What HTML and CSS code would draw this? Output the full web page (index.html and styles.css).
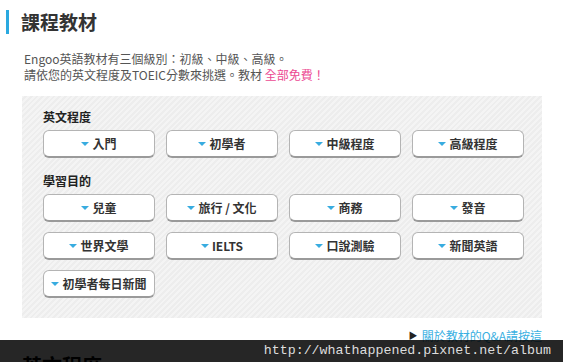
FILE: index.html
```html
<!DOCTYPE html>
<html lang="zh-Hant">
<head>
<meta charset="utf-8">
<link rel="stylesheet" href="styles.css">
</head>
<body>
<div class="page">
  <h2 class="title">課程教材</h2>
  <div class="content">
    <p class="desc">Engoo英語教材有三個級別：初級、中級、高級。<br>請依您的英文程度及TOEIC分數來挑選。教材 <span class="free">全部免費！</span></p>
    <div class="panel">
      <div class="label">英文程度</div>
      <div class="grid">
        <a class="btn"><span class="tri"></span>入門</a>
        <a class="btn"><span class="tri"></span>初學者</a>
        <a class="btn"><span class="tri"></span>中級程度</a>
        <a class="btn"><span class="tri"></span>高級程度</a>
      </div>
      <div class="label label2">學習目的</div>
      <div class="grid">
        <a class="btn"><span class="tri"></span>兒童</a>
        <a class="btn"><span class="tri"></span>旅行 / 文化</a>
        <a class="btn"><span class="tri"></span>商務</a>
        <a class="btn"><span class="tri"></span>發音</a>
        <a class="btn"><span class="tri"></span>世界文學</a>
        <a class="btn"><span class="tri"></span>IELTS</a>
        <a class="btn"><span class="tri"></span>口說測驗</a>
        <a class="btn"><span class="tri"></span>新聞英語</a>
        <a class="btn"><span class="tri"></span>初學者每日新聞</a>
      </div>
    </div>
    <div class="qa"><span class="arrow">▶</span><a class="qa-link">關於教材的Q&amp;A請按這</a></div>
    <h3 class="next">英文程度</h3>
  </div>
</div>
<div class="watermark">http://whathappened.pixnet.net/album</div>
</body>
</html>
```
FILE: styles.css
```css
html, body {
  margin: 0;
  padding: 0;
  background: #fff;
  overflow: hidden;
}
body {
  font-family: "Noto Sans CJK TC", "Noto Sans", sans-serif;
  color: #333;
  height: 362px;
}
.page {
  padding-top: 10px;
}
.title {
  margin: 0 0 0 6px;
  border-left: 3px solid #2aa9e0;
  padding-left: 12px;
  height: 24px;
  line-height: 24px;
  font-size: 19px;
  font-weight: bold;
  color: #333;
}
.content {
  padding: 0 21px 0 22px;
}
.desc {
  margin: 17px 0 0 2px;
  font-size: 12px;
  line-height: 16px;
  color: #555;
}
.free {
  color: #ec4a92;
}
.panel {
  margin-top: 13px;
  padding: 12px 18px 20px 21px;
  background: repeating-linear-gradient(135deg, #f4f4f4 0 2px, #ededed 2px 4px);
}
.label {
  font-size: 12px;
  font-weight: bold;
  line-height: 18px;
  color: #222;
  margin-bottom: 4px;
}
.label2 {
  margin-top: 14px;
}
.grid {
  display: grid;
  grid-template-columns: repeat(4, 1fr);
  column-gap: 11px;
  row-gap: 10px;
}
.btn {
  display: flex;
  align-items: center;
  justify-content: center;
  gap: 3px;
  height: 28px;
  box-sizing: border-box;
  background: #fff;
  border: 1px solid #b4b4b4;
  border-bottom: 2px solid #9a9a9a;
  border-radius: 6px;
  font-size: 12px;
  font-weight: bold;
  color: #333;
}
.tri {
  width: 0;
  height: 0;
  border-left: 4px solid transparent;
  border-right: 4px solid transparent;
  border-top: 4px solid #38ace0;
  margin-top: 1px;
}
.qa {
  display: flex;
  justify-content: flex-end;
  align-items: center;
  gap: 4px;
  margin-top: 10px;
  font-size: 12px;
  line-height: 16px;
}
.arrow {
  font-size: 9px;
  color: #222;
}
.qa-link {
  color: #3ab0e2;
}
.next {
  margin: 10px 0 0 0;
  font-size: 20px;
  font-weight: bold;
  color: #000;
  line-height: 24px;
}
.watermark {
  position: absolute;
  left: 0;
  right: 0;
  top: 340px;
  height: 22px;
  background: rgba(0, 0, 0, 0.85);
  color: #ddd;
  font-family: "Liberation Mono", monospace;
  font-size: 13.3px;
  line-height: 22px;
  text-align: right;
  padding-right: 12px;
}
```
